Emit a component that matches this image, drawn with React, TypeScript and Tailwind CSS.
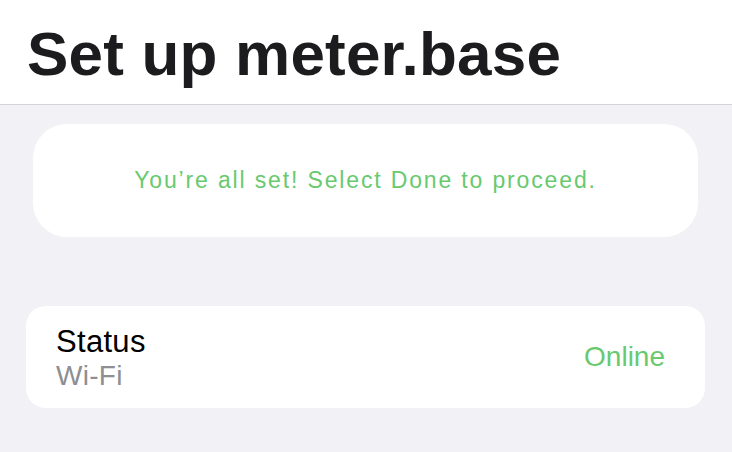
export default function App() {
  return (
    <div className="min-h-[452px] w-full bg-[#f2f1f6] font-['Liberation_Sans',Arial,sans-serif]">
      <header className="h-[105px] border-b border-[#d4d4d8] bg-white pl-[27px] pt-[23px]">
        <h1 className="text-[62px] font-bold leading-none tracking-[0.2px] text-[#1c1c1e]">Set up meter.base</h1>
      </header>

      <section className="ml-[33px] mr-[34px] mt-[19px] flex h-[113px] items-center justify-center rounded-[34px] bg-white">
        <p className="text-[23px] tracking-[1.85px] text-[#68c96f]">You’re all set! Select Done to proceed.</p>
      </section>

      <section className="ml-[26px] mr-[27px] mt-[69px] flex h-[102px] items-center justify-between rounded-[20px] bg-white pl-[30px] pr-[40px]">
        <div className="flex flex-col pt-[2px]">
          <span className="text-[31px] leading-[35px] tracking-[0.3px] text-black">Status</span>
          <span className="text-[28px] leading-[33px] tracking-[0.3px] text-[#8e8e93]">Wi-Fi</span>
        </div>
        <span className="text-[28px] text-[#68c96f]">Online</span>
      </section>
    </div>
  );
}
